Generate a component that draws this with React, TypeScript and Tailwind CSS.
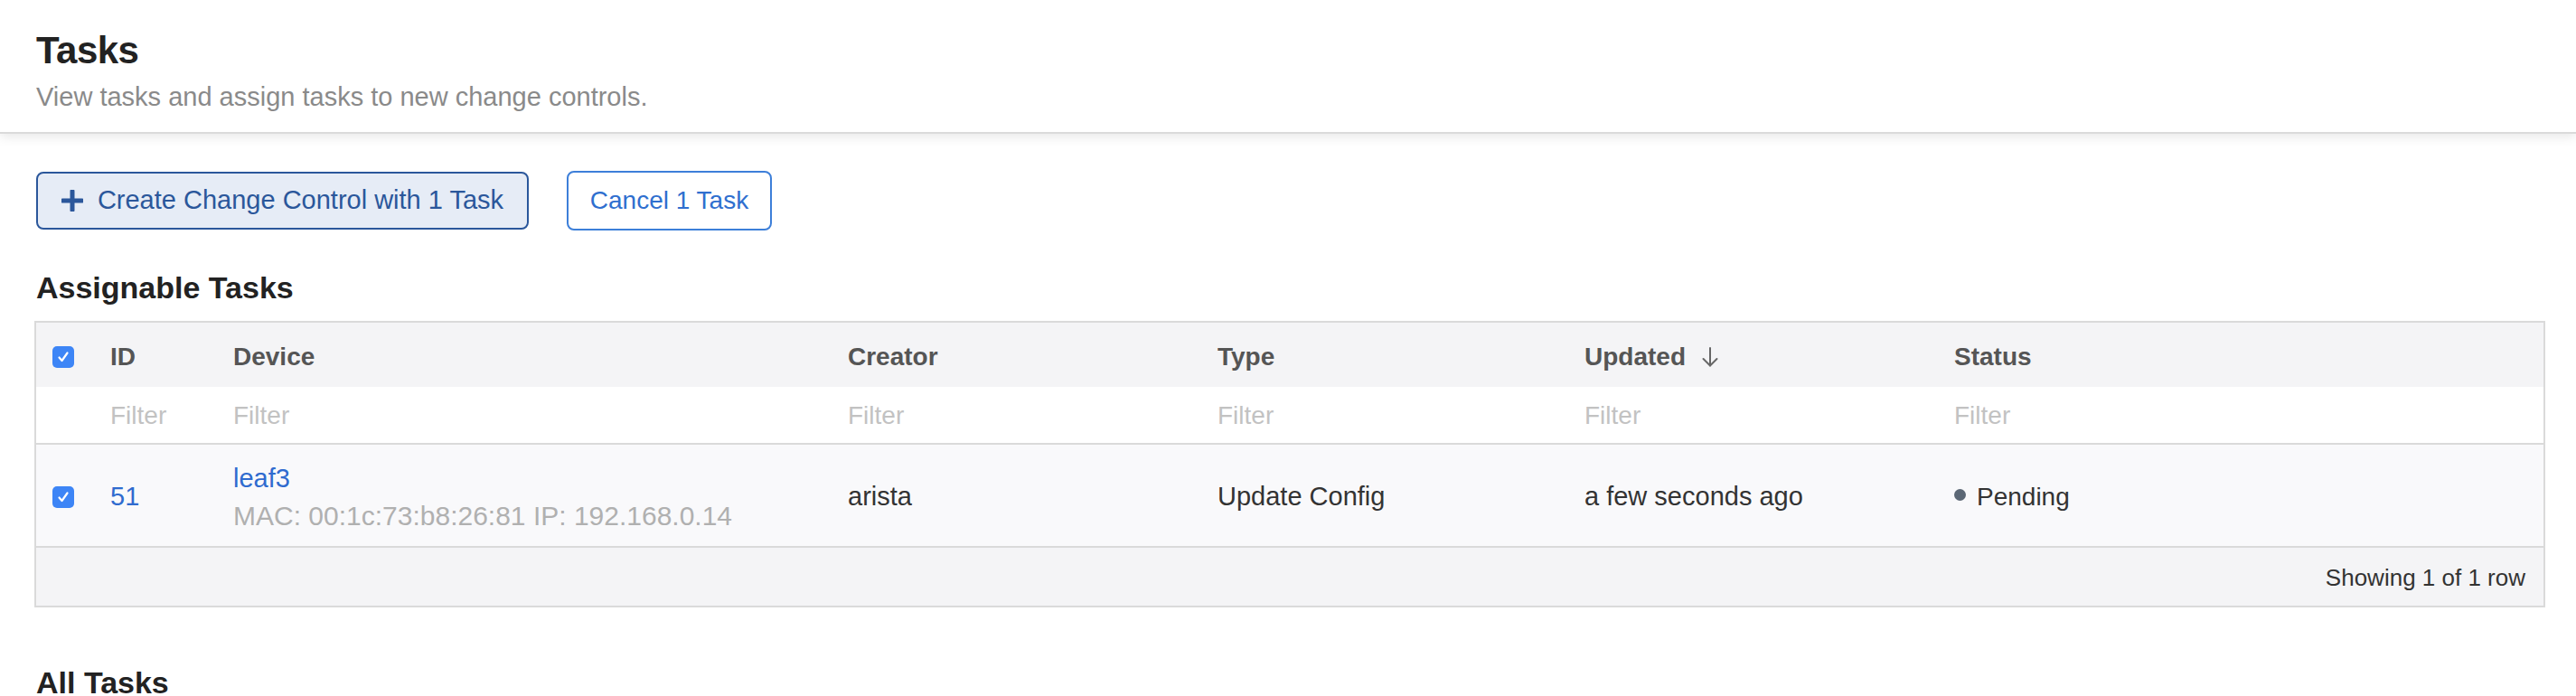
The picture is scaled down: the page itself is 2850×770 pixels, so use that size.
import React from 'react';

const Checkbox = () => (
  <div className="w-[24px] h-[24px] rounded-[5px] bg-[#3d85f6] flex items-center justify-center">
    <svg width="16" height="16" viewBox="0 0 16 16" fill="none">
      <path d="M3.5 8.5 L6.5 12 L12.5 3.5" stroke="white" strokeWidth="2.2" strokeLinecap="round" strokeLinejoin="round" />
    </svg>
  </div>
);

const SortArrow = () => (
  <svg width="18" height="22" viewBox="0 0 18 22" fill="none" className="ml-[18px]">
    <path d="M9 1 V20.5" stroke="#666" strokeWidth="2" strokeLinecap="round" />
    <path d="M1.5 13 L9 20.5 L16.5 13" stroke="#666" strokeWidth="2" strokeLinecap="round" strokeLinejoin="round" />
  </svg>
);

const PlusIcon = () => (
  <svg width="24" height="24" viewBox="0 0 24 24" fill="none">
    <path d="M12 1.5 V22.5 M1.5 12 H22.5" stroke="#2b579b" strokeWidth="5" strokeLinecap="round" />
  </svg>
);

const App = () => {
  const columns = ['ID', 'Device', 'Creator', 'Type', 'Updated', 'Status'];

  return (
    <div className="min-h-screen bg-white font-['Liberation_Sans',Arial,sans-serif]">
      <header className="h-[148px] border-b-2 border-[#dadada] shadow-[0_3px_12px_rgba(0,0,0,0.10)] px-[40px] pt-[32px]">
        <h1 className="text-[42px] leading-[48px] font-bold text-[#222] tracking-[-0.5px]">Tasks</h1>
        <p className="mt-[9px] text-[29px] leading-[36px] text-[#8a8a8a]">
          View tasks and assign tasks to new change controls.
        </p>
      </header>

      <main className="pl-[38px] pr-[34px]">
        <div className="flex gap-[42px] mt-[42px] pl-[2px]">
          <button className="w-[545px] h-[64px] rounded-[8px] border-2 border-[#2b579b] bg-[#e6ecf6] text-[#2b579b] text-[29px] flex items-center justify-center gap-[16px]">
            <PlusIcon />
            Create Change Control with 1 Task
          </button>
          <button className="w-[227px] h-[66px] -mt-[1px] rounded-[8px] border-2 border-[#3d7fd9] bg-white text-[#2f6fcf] text-[28px] flex items-center justify-center">
            Cancel 1 Task
          </button>
        </div>

        <h2 className="mt-[43px] pl-[2px] text-[34px] leading-[40px] font-bold text-[#222]">Assignable Tasks</h2>

        <div className="mt-[17px] border-2 border-[#dadada]">
          <div className="grid grid-cols-[82px_136px_680px_409px_406px_409px_1fr] h-[71px] bg-[#f4f4f6] items-center text-[28px] font-bold text-[#555] pt-[4px]">
            <div className="pl-[18px]">
              <Checkbox />
            </div>
            {columns.map((c) => (
              <div key={c} className="flex items-center">
                {c}
                {c === 'Updated' && <SortArrow />}
              </div>
            ))}
          </div>

          <div className="grid grid-cols-[82px_136px_680px_409px_406px_409px_1fr] h-[64px] bg-white items-center text-[28px] text-[#c2c2c2] border-b-2 border-[#dadada] pt-[2px]">
            <div />
            {columns.map((c) => (
              <div key={c}>Filter</div>
            ))}
          </div>

          <div className="grid grid-cols-[82px_136px_680px_409px_406px_409px_1fr] h-[114px] bg-[#f9f9fb] items-center text-[29px] text-[#333] border-b-2 border-[#dadada] pt-[4px]">
            <div className="pl-[18px]">
              <Checkbox />
            </div>
            <div className="text-[#2f6bcf]">51</div>
            <div className="leading-[42px]">
              <div className="text-[#2f6bcf]">leaf3</div>
              <div className="text-[#b0b0b0] text-[30px]">MAC: 00:1c:73:b8:26:81 IP: 192.168.0.14</div>
            </div>
            <div>arista</div>
            <div>Update Config</div>
            <div>a few seconds ago</div>
            <div className="flex items-center text-[28px]">
              <span className="w-[13px] h-[13px] rounded-full bg-[#5b6775] mr-[12px] -mt-[6px]" />
              Pending
            </div>
          </div>

          <div className="h-[64px] bg-[#f4f4f6] flex items-center justify-end pr-[20px] pt-[2px] text-[26px] text-[#333]">
            Showing 1 of 1 row
          </div>
        </div>

        <h2 className="mt-[63px] pl-[2px] text-[34px] leading-[40px] font-bold text-[#222]">All Tasks</h2>
      </main>
    </div>
  );
};

export default App;
